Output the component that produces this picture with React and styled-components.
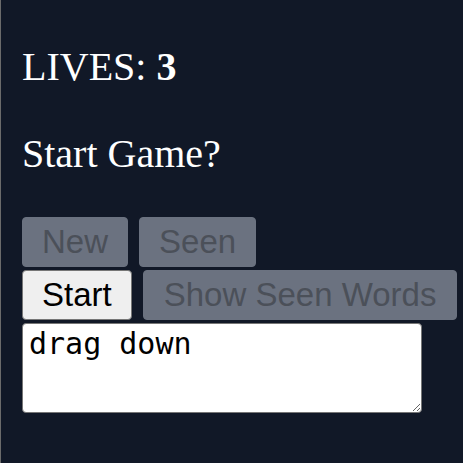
import React, {useState} from "react";
import styled, {createGlobalStyle} from "styled-components";

const GlobalStyle = createGlobalStyle`
  html, body {
    margin: 0;
    height: 100%;
    background: #111827;
  }
  #root {
    min-height: 100%;
  }
`;

const Page = styled.main`
  min-height: 463px;
  box-sizing: border-box;
  border-left: 1px solid #6b6b6b;
  padding: 3px 21px 0;
  color: #ffffff;
  font-family: "Liberation Serif", "Times New Roman", serif;
`;

const Line = styled.p`
  font-size: 40px;
  margin: 40px 0;
`;

const Controls = styled.div`
  display: flex;
  flex-direction: column;
  align-items: flex-start;
  gap: 3px;
  margin-top: 40px;
`;

const Row = styled.div`
  display: flex;
  gap: 11px;
`;

const Button = styled.button`
  flex-shrink: 0;
  height: 50px;
  padding: 0 ${(p) => p.$pad || 19}px;
  box-sizing: border-box;
  white-space: nowrap;
  font-family: "Liberation Sans", Arial, sans-serif;
  font-size: 33px;
  border-radius: 4px;
  border: 1px solid ${(p) => (p.disabled ? "#6b7280" : "#767676")};
  background: ${(p) => (p.disabled ? "#6b7280" : "#efefef")};
  color: ${(p) => (p.disabled ? "#4b5059" : "#000000")};
  cursor: ${(p) => (p.disabled ? "default" : "pointer")};
`;

const Input = styled.textarea`
  width: 400px;
  height: 90px;
  box-sizing: border-box;
  margin: 0;
  padding: 2px 6px;
  border: 1px solid #767676;
  border-radius: 4px;
  background: #ffffff;
  color: #000000;
  font-family: "DejaVu Sans Mono", "Liberation Mono", monospace;
  font-size: 30px;
  line-height: 1.2;
`;

const App = () => {
    const [text, setText] = useState("drag down");
    const lives = 3;

    return (
        <>
            <GlobalStyle />
            <Page>
                <Line>LIVES: <b>{lives}</b></Line>
                <Line>Start Game?</Line>
                <Controls>
                    <Row>
                        <Button disabled>New</Button>
                        <Button disabled>Seen</Button>
                    </Row>
                    <Row>
                        <Button>Start</Button>
                        <Button disabled $pad={20}>Show Seen Words</Button>
                    </Row>
                    <Input value={text} onChange={(e) => setText(e.target.value)} />
                </Controls>
            </Page>
        </>
    );
};

export default App;
